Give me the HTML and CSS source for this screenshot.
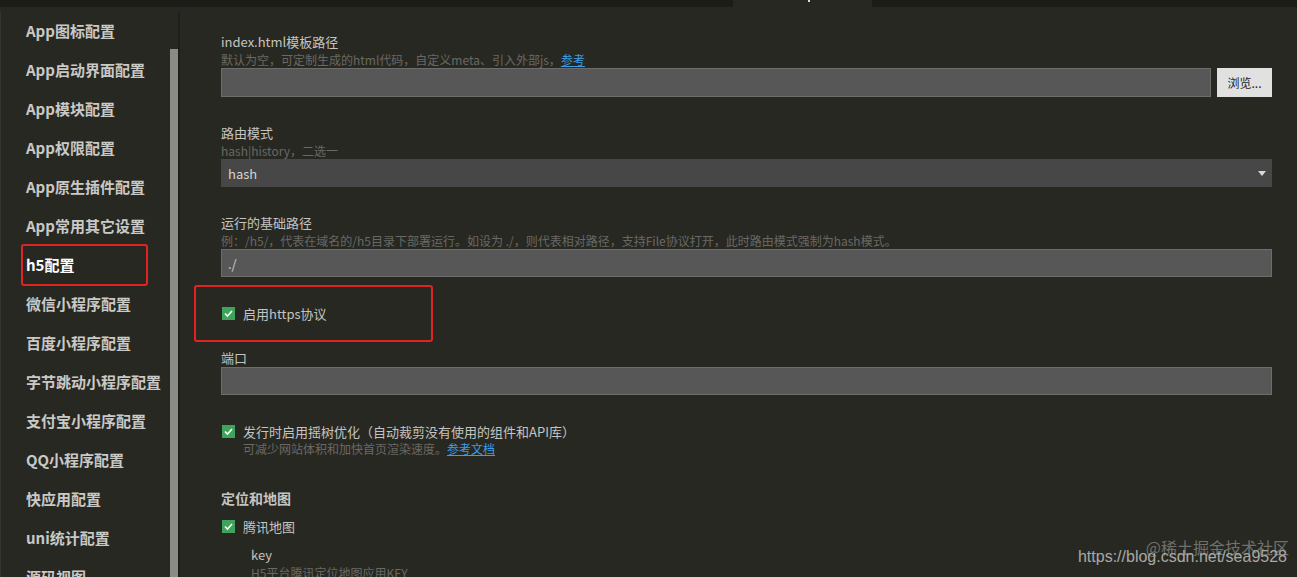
FILE: index.html
```html
<!DOCTYPE html>
<html lang="zh-CN">
<head>
    <meta charset="UTF-8">
    <title>manifest.json - h5配置</title>
    <link rel="stylesheet" href="styles.css">
</head>
<body>
    <div class="topbar"><div class="tab"><span class="dot"></span></div></div>
    <div class="main">
        <aside class="sidebar">
            <ul class="nav">
                <li>App图标配置</li>
                <li>App启动界面配置</li>
                <li>App模块配置</li>
                <li>App权限配置</li>
                <li>App原生插件配置</li>
                <li>App常用其它设置</li>
                <li class="active marked">h5配置</li>
                <li>微信小程序配置</li>
                <li>百度小程序配置</li>
                <li>字节跳动小程序配置</li>
                <li>支付宝小程序配置</li>
                <li>QQ小程序配置</li>
                <li>快应用配置</li>
                <li>uni统计配置</li>
                <li>源码视图</li>
            </ul>
            <div class="scrollbar"><div class="thumb"></div></div>
        </aside>

        <div class="content">
            <div class="field">
                <div class="label">index.html模板路径</div>
                <div class="desc">默认为空，可定制生成的html代码，自定义meta、引入外部js，<a href="#">参考</a></div>
                <div class="file-row">
                    <input class="text-input" type="text">
                    <button class="browse">浏览...</button>
                </div>
            </div>

            <div class="field">
                <div class="label">路由模式</div>
                <div class="desc">hash|history，二选一</div>
                <div class="select">
                    <span>hash</span>
                    <svg class="arrow" width="8" height="5" viewBox="0 0 8 5"><path d="M0 0 L8 0 L4 5 Z" fill="#d8d8d8"/></svg>
                </div>
            </div>

            <div class="field">
                <div class="label">运行的基础路径</div>
                <div class="desc">例：/h5/，代表在域名的/h5目录下部署运行。如设为 ./，则代表相对路径，支持File协议打开，此时路由模式强制为hash模式。</div>
                <input class="text-input" type="text" value="./">
            </div>

            <div class="check-row marked">
                <span class="checkbox"><svg width="13" height="13" viewBox="0 0 13 13"><path d="M3 6.5 L5.5 9 L10 4" fill="none" stroke="#fff" stroke-width="1.6"/></svg></span>
                <span class="check-label">启用https协议</span>
            </div>

            <div class="field port">
                <div class="label">端口</div>
                <input class="text-input" type="text">
            </div>

            <div class="check-row tree">
                <span class="checkbox"><svg width="13" height="13" viewBox="0 0 13 13"><path d="M3 6.5 L5.5 9 L10 4" fill="none" stroke="#fff" stroke-width="1.6"/></svg></span>
                <span class="check-label">发行时启用摇树优化（自动裁剪没有使用的组件和API库）</span>
            </div>
            <div class="desc indent">可减少网站体积和加快首页渲染速度。<a href="#">参考文档</a></div>

            <div class="section-title">定位和地图</div>
            <div class="check-row map">
                <span class="checkbox"><svg width="13" height="13" viewBox="0 0 13 13"><path d="M3 6.5 L5.5 9 L10 4" fill="none" stroke="#fff" stroke-width="1.6"/></svg></span>
                <span class="check-label">腾讯地图</span>
            </div>
            <div class="sub-field">
                <div class="label">key</div>
                <div class="desc">H5平台腾讯定位地图应用KEY</div>
            </div>
        </div>
    </div>

    <div class="watermark">
        <div class="wm-top">@稀土掘金技术社区</div>
        <div class="wm-url">https://blog.csdn.net/sea9528</div>
    </div>
</body>
</html>
```

FILE: styles.css
```css
body {
    margin: 0;
    width: 1297px;
    height: 577px;
    overflow: hidden;
    background-color: #282823;
    font-family: "Noto Sans CJK SC", "Noto Sans", sans-serif;
    position: relative;
}
.topbar {
    height: 7px;
    background-color: #1c1d19;
    position: relative;
}
.tab {
    position: absolute;
    left: 733px;
    top: 0;
    width: 139px;
    height: 7px;
    background-color: #282823;
}
.dot {
    position: absolute;
    left: 75px;
    top: 0;
    width: 2px;
    height: 2px;
    background: #ddd;
}
.main {
    display: flex;
    height: 570px;
}
.sidebar {
    width: 180px;
    display: flex;
    border-right: 2px solid #1e1f1b;
    border-left: 1px solid #34352f;
    box-sizing: border-box;
    margin-top: 5px;
}
.nav {
    list-style: none;
    margin: 0;
    padding: 0;
    margin-top: -1px;
    flex: 1;
}
.nav li {
    height: 39px;
    line-height: 39px;
    padding-left: 25px;
    font-size: 15px;
    font-weight: bold;
    color: #c9c9c6;
    white-space: nowrap;
    position: relative;
}
.nav li.active {
    color: #ffffff;
}
.nav li.marked::after {
    content: "";
    position: absolute;
    left: 20px;
    top: -1px;
    width: 123px;
    height: 38px;
    border: 2px solid #e02424;
    border-radius: 3px;
}
.scrollbar {
    width: 8px;
    padding-top: 37px;
}
.thumb {
    height: 100%;
    background-color: #8a8a87;
}
.content {
    flex: 1;
    padding: 26px 25px 0 41px;
}
.field {
    margin-bottom: 27px;
}
.label {
    font-size: 13px;
    line-height: 18px;
    color: #c4c4c0;
}
.desc {
    font-size: 12px;
    line-height: 17px;
    color: #696964;
    white-space: nowrap;
}
.desc a {
    color: #3b9ee6;
}
.text-input {
    display: block;
    width: 100%;
    height: 28px;
    box-sizing: border-box;
    background-color: #575757;
    border: 1px solid #6c6c6a;
    color: #cfcfcf;
    font-family: "Noto Sans CJK SC", sans-serif;
    font-size: 13px;
    padding: 0 6px;
    outline: none;
}
.file-row {
    display: flex;
    gap: 6px;
}
.file-row .text-input {
    flex: 1;
    height: 29px;
}
.browse {
    width: 55px;
    height: 29px;
    border: none;
    background-color: #e1e1e1;
    color: #222;
    font-family: "Noto Sans CJK SC", sans-serif;
    font-size: 12px;
    padding: 0;
}
.select {
    height: 28px;
    background-color: #474747;
    display: flex;
    align-items: center;
    justify-content: space-between;
    padding: 0 6px 0 7px;
    font-size: 13px;
    color: #d4d4d0;
}
.check-row {
    display: flex;
    align-items: center;
    height: 18px;
    position: relative;
}
.check-row.marked {
    margin-top: 26px;
    margin-bottom: 27px;
}
.check-row.marked::after {
    content: "";
    position: absolute;
    left: -27px;
    top: -19px;
    width: 235px;
    height: 53px;
    border: 2px solid #e02424;
    border-radius: 3px;
}
.checkbox {
    width: 13px;
    height: 13px;
    margin-left: 1px;
    background-color: #3ea45c;
    display: flex;
}
.check-label {
    margin-left: 8px;
    font-size: 13px;
    color: #c4c4c0;
}
.port {
    margin-bottom: 27px;
}
.desc.indent {
    padding-left: 22px;
}
.section-title {
    margin-top: 31px;
    font-size: 14px;
    font-weight: bold;
    line-height: 20px;
    color: #c4c4c0;
}
.check-row.map {
    margin-top: 9px;
}
.sub-field {
    margin-top: 11px;
    padding-left: 30px;
}
.watermark {
    position: absolute;
    right: 10px;
    bottom: 12px;
    text-align: right;
    color: #a9a9a6;
    font-family: "Liberation Sans", Arial, sans-serif;
}
.wm-top {
    font-size: 16px;
    line-height: 16px;
    color: #6f706b;
    margin-right: -2px;
    font-family: "Noto Sans CJK SC", sans-serif;
}
.wm-url {
    font-size: 16px;
    line-height: 16px;
    margin-top: -6px;
}
```
